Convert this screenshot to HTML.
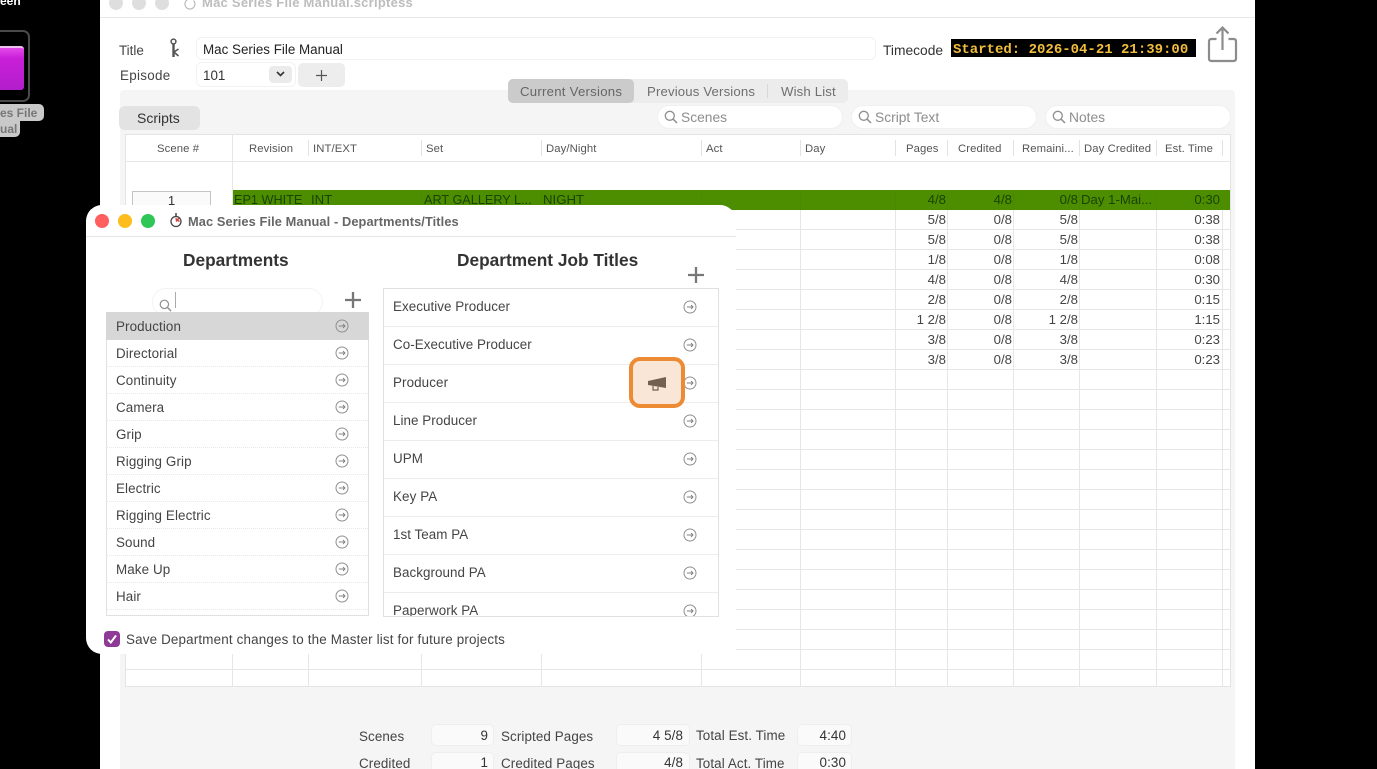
<!DOCTYPE html>
<html lang="en"><head><meta charset="utf-8"><title>Mac Series File Manual</title>
<style>
html,body{margin:0;padding:0;background:#000;width:1377px;height:769px;overflow:hidden}
body{position:relative;font-family:"Liberation Sans",sans-serif;font-size:13px;color:#333}
#w{position:absolute;left:0;top:0;width:1377px;height:769px;overflow:hidden;filter:blur(.3px)}
.a{position:absolute;box-sizing:border-box}
.t{position:absolute;white-space:nowrap;line-height:20px;height:20px;margin-top:1px}
.r{text-align:right}
.h{font-size:11.3px;color:#555;letter-spacing:.1px}
.d{font-size:13.2px;color:#444}
.g{font-size:13.2px;color:#1a4300}
.l{font-size:13.4px;color:#444;letter-spacing:.1px}
.f{background:#fafafa;border:1px solid #eeeeee;border-radius:5px}
.s{background:#fff;border-radius:12px;border:1px solid #f0f0f0}
.q{color:#8d8d8d;font-size:13.8px}
svg{position:absolute;overflow:visible}
</style></head><body>
<svg width="0" height="0" style="position:absolute"><defs>
<symbol id="go" viewBox="0 0 14 14"><circle cx="7" cy="7" r="6" fill="none" stroke="#8f8f8f" stroke-width="1"/><path d="M3.8 7H10M8 5 10 7 8 9" fill="none" stroke="#808080" stroke-width=".9"/></symbol>
<symbol id="mag" viewBox="0 0 14 14"><circle cx="5.8" cy="5.8" r="4.5" fill="none" stroke="#8f8f8f" stroke-width="1.3"/><path d="M9.2 9.2 13 13" stroke="#8f8f8f" stroke-width="1.5" fill="none"/></symbol>
</defs></svg>
<div id="w">

<!-- desktop -->
<div class="t" style="left:0;top:-10px;color:#fff;font-weight:bold;font-size:12px">een</div>
<div class="a" style="left:-20px;top:30px;width:50px;height:72px;border:2px solid #4a4a4a;border-radius:7px"></div>
<div class="a" style="left:-10px;top:46px;width:34px;height:44px;border-radius:3px;background:linear-gradient(#e44ae8,#c81fd8 25%,#b21ecb);border-top:2px solid #ecc0ee"></div>
<div class="a" style="left:-10px;top:104px;width:54px;height:17px;background:#c9c9c9;border-radius:5px"></div>
<div class="a" style="left:-10px;top:120px;width:30px;height:17px;background:#c9c9c9;border-radius:0 0 5px 5px"></div>
<div class="t" style="left:0;top:102px;font-size:12px;font-weight:bold;color:#777">es File</div>
<div class="t" style="left:0;top:118px;font-size:12px;font-weight:bold;color:#777">ual</div>

<!-- main window -->
<div class="a" style="left:100px;top:0;width:1155px;height:769px;background:#fff"></div>
<div class="a" style="left:100px;top:17px;width:1155px;height:1px;background:#e8e8e8"></div>
<div class="a" style="left:109px;top:-4px;width:14px;height:14px;border-radius:50%;background:#dedede"></div>
<div class="a" style="left:132px;top:-4px;width:14px;height:14px;border-radius:50%;background:#dedede"></div>
<div class="a" style="left:155px;top:-4px;width:14px;height:14px;border-radius:50%;background:#dedede"></div>
<svg style="left:184px;top:-2px" width="12" height="12" viewBox="0 0 12 12"><path d="M9.500 2.500A5 5 0 1 1 6 1" fill="none" stroke="#bbb" stroke-width="1.200"/></svg>
<div class="t" style="left:202px;top:-8px;font-weight:bold;color:#bdbdbd;font-size:13px;letter-spacing:.25px">Mac Series File Manual.scriptess</div>

<div class="t" style="left:119px;top:40px;color:#444;font-size:13.400px">Title</div>
<svg style="left:169px;top:38px" width="12" height="20" viewBox="0 0 12 20"><circle cx="4.500" cy="3.500" r="2.400" fill="none" stroke="#555" stroke-width="1.500"/><path d="M4.500 6V19" stroke="#555" stroke-width="2.400" fill="none"/><path d="M5 14 9.500 11M5.500 14.500 9.500 18" stroke="#555" stroke-width="1.600" fill="none"/></svg>
<div class="a" style="left:196px;top:37px;width:680px;height:23px;background:#fff;border:1px solid #f2f2f2;border-radius:6px"></div>
<div class="t" style="left:203px;top:39px;color:#222;font-size:13.400px">Mac Series File Manual</div>
<div class="t" style="left:120px;top:65px;color:#444;font-size:13.400px;letter-spacing:.3px">Episode</div>
<div class="a" style="left:196px;top:62px;width:100px;height:25px;background:#fff;border:1px solid #f2f2f2;border-radius:6px"></div>
<div class="t" style="left:203px;top:65px;color:#333;font-size:13.400px">101</div>
<div class="a" style="left:269px;top:66px;width:23px;height:17px;background:#ebebeb;border-radius:4px"></div>
<svg style="left:276px;top:71px" width="9" height="6" viewBox="0 0 9 6"><path d="M1 1 4.500 4.500 8 1" fill="none" stroke="#333" stroke-width="1.600"/></svg>
<div class="a" style="left:298px;top:63px;width:47px;height:24px;background:#ededed;border-radius:5px"></div>
<svg style="left:316px;top:70px" width="11" height="11" viewBox="0 0 11 11"><path d="M5.500 0V11M0 5.500H11" stroke="#555" stroke-width="1.200"/></svg>

<div class="t" style="left:883px;top:40px;color:#333;font-size:13.800px">Timecode</div>
<div class="a" style="left:951px;top:39px;width:245px;height:18px;background:#000"></div>
<div class="t" style="left:953px;top:39px;font-family:'Liberation Mono',monospace;font-weight:bold;font-size:14px;color:#f1bd3c;line-height:20px">Started: 2026-04-21 21:39:00</div>
<svg style="left:1207px;top:26px" width="31" height="38" viewBox="0 0 31 38"><path d="M9.500 13H4.500Q2 13 2 15.500V32.500Q2 35 4.500 35H26.500Q29 35 29 32.500V15.500Q29 13 26.500 13H21.500" fill="none" stroke="#8c8c8c" stroke-width="2.200"/><path d="M15.500 24V2M9.500 7.500 15.500 1.500 21.500 7.500" fill="none" stroke="#8c8c8c" stroke-width="2.200"/></svg>

<!-- panel -->
<div class="a" style="left:120px;top:90px;width:1115px;height:679px;background:#f5f5f5;border-radius:4px 4px 0 0"></div>
<div class="a" style="left:508px;top:79px;width:340px;height:24px;background:#ececec;border-radius:5px"></div>
<div class="a" style="left:508px;top:79px;width:126px;height:24px;background:#cbcbcb;border-radius:5px"></div>
<div class="a" style="left:767px;top:84px;width:1px;height:14px;background:#d8d8d8"></div>
<div class="t" style="left:520px;top:81px;color:#666;font-size:13.200px;letter-spacing:.25px">Current Versions</div>
<div class="t" style="left:647px;top:81px;color:#6f6f6f;font-size:13.200px;letter-spacing:.15px">Previous Versions</div>
<div class="t" style="left:781px;top:81px;color:#6f6f6f;font-size:13.200px;letter-spacing:.15px">Wish List</div>

<div class="a" style="left:119px;top:106px;width:81px;height:24px;background:#e3e3e3;border-radius:6px"></div>
<div class="t" style="left:137px;top:107px;color:#333;font-size:14px">Scripts</div>

<div class="a s" style="left:657px;top:105px;width:186px;height:24px"></div>
<svg style="left:664px;top:110px" width="14" height="14"><use href="#mag"/></svg>
<div class="t q" style="left:681px;top:107px">Scenes</div>
<div class="a s" style="left:851px;top:105px;width:186px;height:24px"></div>
<svg style="left:858px;top:110px" width="14" height="14"><use href="#mag"/></svg>
<div class="t q" style="left:875px;top:107px">Script Text</div>
<div class="a s" style="left:1045px;top:105px;width:186px;height:24px"></div>
<svg style="left:1052px;top:110px" width="14" height="14"><use href="#mag"/></svg>
<div class="t q" style="left:1069px;top:107px">Notes</div>

<!-- table -->
<div class="a" style="left:125px;top:134px;width:1106px;height:553px;background:#fff;border:1px solid #e4e4e4"></div>
<svg style="left:0;top:0" width="1377" height="769"><path d="M125 161.500H1231M232.500 134V687M308.500 210V687M421.500 210V687M541.500 210V687M701.500 210V687M800.500 210V687M895.500 210V687M947.500 210V687M1013.500 210V687M1079.500 210V687M1156.500 210V687M1222.500 210V687" stroke="#e6e6e6" stroke-width="1" fill="none"/><path d="M308.500 140V156M421.500 140V156M541.500 140V156M701.500 140V156M800.500 140V156M895.500 140V156M947.500 140V156M1013.500 140V156M1079.500 140V156M1156.500 140V156M1222.500 140V156" stroke="#e2e2e2" fill="none"/><path d="M232 229.500H1231M232 249.500H1231M232 269.500H1231M232 289.500H1231M232 309.500H1231M232 329.500H1231M232 349.500H1231M232 369.500H1231M232 389.500H1231M232 409.500H1231M232 429.500H1231M232 449.500H1231M232 469.500H1231M232 489.500H1231M232 509.500H1231M232 529.500H1231M232 549.500H1231M232 569.500H1231M232 589.500H1231M232 609.500H1231M232 629.500H1231M232 649.500H1231M125 669.500H1231" stroke="#e6e6e6" fill="none"/></svg>

<div class="t h" style="left:157px;top:138px">Scene #</div>
<div class="t h" style="left:249px;top:138px">Revision</div>
<div class="t h" style="left:313px;top:138px">INT/EXT</div>
<div class="t h" style="left:426px;top:138px">Set</div>
<div class="t h" style="left:546px;top:138px">Day/Night</div>
<div class="t h" style="left:706px;top:138px">Act</div>
<div class="t h" style="left:805px;top:138px">Day</div>
<div class="t h" style="left:906px;top:138px">Pages</div>
<div class="t h" style="left:958px;top:138px">Credited</div>
<div class="t h" style="left:1022px;top:138px">Remaini...</div>
<div class="t h" style="left:1084px;top:138px">Day Credited</div>
<div class="t h" style="left:1165px;top:138px">Est. Time</div>

<div class="a" style="left:132px;top:191px;width:79px;height:20px;background:#fafafa;border:1px solid #c4c4c4"></div>
<div class="t d" style="left:132px;width:79px;text-align:center;top:190px;color:#333">1</div>

<div class="a" style="left:233px;top:190px;width:997px;height:20px;background:#4d8e00"></div>
<svg style="left:0;top:0" width="1377" height="769"><path d="M421.500 190V210M541.500 190V210M701.500 190V210M800.500 190V210M895.500 190V210M947.500 190V210M1013.500 190V210M1079.500 190V210M1156.500 190V210" stroke="#4a8806" fill="none"/></svg>
<div class="t g" style="left:234px;top:189px;font-size:12.700px">EP1 WHITE</div>
<div class="t g" style="left:311px;top:189px">INT</div>
<div class="t g" style="left:424px;top:189px;font-size:12.700px">ART GALLERY L...</div>
<div class="t g" style="left:543px;top:189px">NIGHT</div>
<div class="t g r" style="left:880px;width:66px;top:189px">4/8</div>
<div class="t g r" style="left:946px;width:66px;top:189px">4/8</div>
<div class="t g r" style="left:1012px;width:66px;top:189px">0/8</div>
<div class="t g" style="left:1081px;top:189px">Day 1-Mai...</div>
<div class="t g r" style="left:1154px;width:66px;top:189px">0:30</div>

<div class="t d r" style="left:880px;width:66px;top:209px">5/8</div><div class="t d r" style="left:946px;width:66px;top:209px">0/8</div><div class="t d r" style="left:1012px;width:66px;top:209px">5/8</div><div class="t d r" style="left:1154px;width:66px;top:209px">0:38</div>
<div class="t d r" style="left:880px;width:66px;top:229px">5/8</div><div class="t d r" style="left:946px;width:66px;top:229px">0/8</div><div class="t d r" style="left:1012px;width:66px;top:229px">5/8</div><div class="t d r" style="left:1154px;width:66px;top:229px">0:38</div>
<div class="t d r" style="left:880px;width:66px;top:249px">1/8</div><div class="t d r" style="left:946px;width:66px;top:249px">0/8</div><div class="t d r" style="left:1012px;width:66px;top:249px">1/8</div><div class="t d r" style="left:1154px;width:66px;top:249px">0:08</div>
<div class="t d r" style="left:880px;width:66px;top:269px">4/8</div><div class="t d r" style="left:946px;width:66px;top:269px">0/8</div><div class="t d r" style="left:1012px;width:66px;top:269px">4/8</div><div class="t d r" style="left:1154px;width:66px;top:269px">0:30</div>
<div class="t d r" style="left:880px;width:66px;top:289px">2/8</div><div class="t d r" style="left:946px;width:66px;top:289px">0/8</div><div class="t d r" style="left:1012px;width:66px;top:289px">2/8</div><div class="t d r" style="left:1154px;width:66px;top:289px">0:15</div>
<div class="t d r" style="left:880px;width:66px;top:309px">1 2/8</div><div class="t d r" style="left:946px;width:66px;top:309px">0/8</div><div class="t d r" style="left:1012px;width:66px;top:309px">1 2/8</div><div class="t d r" style="left:1154px;width:66px;top:309px">1:15</div>
<div class="t d r" style="left:880px;width:66px;top:329px">3/8</div><div class="t d r" style="left:946px;width:66px;top:329px">0/8</div><div class="t d r" style="left:1012px;width:66px;top:329px">3/8</div><div class="t d r" style="left:1154px;width:66px;top:329px">0:23</div>
<div class="t d r" style="left:880px;width:66px;top:349px">3/8</div><div class="t d r" style="left:946px;width:66px;top:349px">0/8</div><div class="t d r" style="left:1012px;width:66px;top:349px">3/8</div><div class="t d r" style="left:1154px;width:66px;top:349px">0:23</div>

<!-- totals -->
<div class="a f" style="left:431px;top:724px;width:63px;height:22px"></div>
<div class="a f" style="left:616px;top:724px;width:74px;height:22px"></div>
<div class="a f" style="left:797px;top:724px;width:55px;height:22px"></div>
<div class="a f" style="left:431px;top:752px;width:63px;height:22px"></div>
<div class="a f" style="left:616px;top:752px;width:74px;height:22px"></div>
<div class="a f" style="left:797px;top:752px;width:55px;height:22px"></div>
<div class="t l" style="left:359px;top:726px">Scenes</div>
<div class="t l r" style="left:440px;width:48px;top:725px;color:#333">9</div>
<div class="t l" style="left:501px;top:726px">Scripted Pages</div>
<div class="t l r" style="left:625px;width:58px;top:725px;color:#333">4 5/8</div>
<div class="t l" style="left:696px;top:725px">Total Est. Time</div>
<div class="t l r" style="left:806px;width:40px;top:725px;color:#333">4:40</div>
<div class="t l" style="left:359px;top:753px">Credited</div>
<div class="t l r" style="left:440px;width:48px;top:752px;color:#333">1</div>
<div class="t l" style="left:501px;top:753px">Credited Pages</div>
<div class="t l r" style="left:625px;width:58px;top:752px;color:#333">4/8</div>
<div class="t l" style="left:696px;top:753px">Total Act. Time</div>
<div class="t l r" style="left:806px;width:40px;top:752px;color:#333">0:30</div>

<!-- dialog -->
<div class="a" style="left:86px;top:205px;width:650px;height:425px;background:#fff;border-radius:16px 16px 0 0"></div>
<div class="a" style="left:731px;top:625px;width:5px;height:25px;background:#fff"></div>
<div class="a" style="left:86px;top:625px;width:645px;height:29px;background:#fff;border-radius:0 0 0 16px"></div>
<div class="a" style="left:86px;top:236px;width:650px;height:1px;background:#e6e6e6"></div>
<div class="a" style="left:95px;top:214px;width:14px;height:14px;border-radius:50%;background:#ff5f5f"></div>
<div class="a" style="left:118px;top:214px;width:14px;height:14px;border-radius:50%;background:#fdbd1d"></div>
<div class="a" style="left:141px;top:214px;width:14px;height:14px;border-radius:50%;background:#2ec656"></div>
<svg style="left:169px;top:212px" width="14" height="16" viewBox="0 0 14 16"><circle cx="7" cy="9.500" r="5" fill="none" stroke="#444" stroke-width="1.300"/><path d="M7 1V4.500" stroke="#444" stroke-width="1.500"/><path d="M6.500 6.500 10.500 9.500M10 6 7 9.500" stroke="#d24040" stroke-width="1.500" fill="none"/></svg>
<div class="t" style="left:188px;top:211px;font-weight:bold;font-size:12.800px;color:#666;letter-spacing:.1px">Mac Series File Manual - Departments/Titles</div>

<div class="t" style="left:183px;top:249px;font-weight:bold;font-size:17.300px;color:#333">Departments</div>
<div class="t" style="left:457px;top:249px;font-weight:bold;font-size:17.300px;color:#333">Department Job Titles</div>
<svg style="left:688px;top:267px" width="16" height="16" viewBox="0 0 16 16"><path d="M8 0V16M0 8H16" stroke="#777" stroke-width="2.300"/></svg>
<svg style="left:345px;top:292px" width="16" height="16" viewBox="0 0 16 16"><path d="M8 0V16M0 8H16" stroke="#777" stroke-width="2.300"/></svg>
<div class="a" style="left:152px;top:288px;width:171px;height:28px;background:#fff;border:1px solid #f3f3f3;border-radius:14px"></div>
<svg style="left:159px;top:299px" width="13" height="13"><use href="#mag"/></svg>
<div class="a" style="left:175px;top:292px;width:1px;height:16px;background:#aaa"></div>

<!-- departments list -->
<div class="a" style="left:106px;top:312px;width:263px;height:304px;background:#fff;border:1px solid #e0e0e0;border-top:0"></div>
<div class="a" style="left:106px;top:312px;width:263px;height:28px;background:#d7d7d7"></div>
<svg style="left:0;top:0" width="1377" height="769"><path d="M107 366.500H368M107 393.500H368M107 420.500H368M107 447.500H368M107 474.500H368M107 501.500H368M107 528.500H368M107 555.500H368M107 582.500H368M107 609.500H368" stroke="#e8e8e8" stroke-dasharray="1 1" fill="none"/></svg>
<div class="t l" style="left:116px;top:316px">Production</div>
<div class="t l" style="left:116px;top:343px">Directorial</div>
<div class="t l" style="left:116px;top:370px">Continuity</div>
<div class="t l" style="left:116px;top:397px">Camera</div>
<div class="t l" style="left:116px;top:424px">Grip</div>
<div class="t l" style="left:116px;top:451px">Rigging Grip</div>
<div class="t l" style="left:116px;top:478px">Electric</div>
<div class="t l" style="left:116px;top:505px">Rigging Electric</div>
<div class="t l" style="left:116px;top:532px">Sound</div>
<div class="t l" style="left:116px;top:559px">Make Up</div>
<div class="t l" style="left:116px;top:586px">Hair</div>
<svg style="left:334.500px;top:319px" width="14" height="14"><use href="#go"/></svg>
<svg style="left:334.500px;top:346px" width="14" height="14"><use href="#go"/></svg>
<svg style="left:334.500px;top:373px" width="14" height="14"><use href="#go"/></svg>
<svg style="left:334.500px;top:400px" width="14" height="14"><use href="#go"/></svg>
<svg style="left:334.500px;top:427px" width="14" height="14"><use href="#go"/></svg>
<svg style="left:334.500px;top:454px" width="14" height="14"><use href="#go"/></svg>
<svg style="left:334.500px;top:481px" width="14" height="14"><use href="#go"/></svg>
<svg style="left:334.500px;top:508px" width="14" height="14"><use href="#go"/></svg>
<svg style="left:334.500px;top:535px" width="14" height="14"><use href="#go"/></svg>
<svg style="left:334.500px;top:562px" width="14" height="14"><use href="#go"/></svg>
<svg style="left:334.500px;top:589px" width="14" height="14"><use href="#go"/></svg>

<!-- job titles list -->
<div class="a" style="left:383px;top:288px;width:336px;height:329px;background:#fff;border:1px solid #e0e0e0;overflow:hidden">
<svg style="left:-384px;top:-289px" width="1377" height="769"><path d="M384 326.500H718M384 364.500H718M384 402.500H718M384 440.500H718M384 478.500H718M384 516.500H718M384 554.500H718M384 592.500H718" stroke="#ececec" fill="none"/></svg>
<div class="t l" style="left:9px;top:7px;letter-spacing:.05px">Executive Producer</div>
<div class="t l" style="left:9px;top:45px;letter-spacing:.05px">Co-Executive Producer</div>
<div class="t l" style="left:9px;top:83px">Producer</div>
<div class="t l" style="left:9px;top:121px;letter-spacing:.05px">Line Producer</div>
<div class="t l" style="left:9px;top:159px">UPM</div>
<div class="t l" style="left:9px;top:197px">Key PA</div>
<div class="t l" style="left:9px;top:235px;letter-spacing:.05px">1st Team PA</div>
<div class="t l" style="left:9px;top:273px;letter-spacing:.05px">Background PA</div>
<div class="t l" style="left:9px;top:311px;letter-spacing:.05px">Paperwork PA</div>
<svg style="left:299px;top:11px" width="14" height="14"><use href="#go"/></svg>
<svg style="left:299px;top:49px" width="14" height="14"><use href="#go"/></svg>
<svg style="left:299px;top:87px" width="14" height="14"><use href="#go"/></svg>
<svg style="left:299px;top:125px" width="14" height="14"><use href="#go"/></svg>
<svg style="left:299px;top:163px" width="14" height="14"><use href="#go"/></svg>
<svg style="left:299px;top:201px" width="14" height="14"><use href="#go"/></svg>
<svg style="left:299px;top:239px" width="14" height="14"><use href="#go"/></svg>
<svg style="left:299px;top:277px" width="14" height="14"><use href="#go"/></svg>
<svg style="left:299px;top:315px" width="14" height="14"><use href="#go"/></svg>
</div>

<!-- highlight -->
<div class="a" style="left:629px;top:357px;width:56px;height:51px;background:#f9e6d6;border:4px solid #ec8b33;border-radius:11px"></div>
<svg style="left:647px;top:376px" width="20" height="15" viewBox="0 0 20 15"><path d="M1 5 19 1V12L1 9Z" fill="#75604f"/><path d="M6 10V14H11V11" fill="none" stroke="#75604f" stroke-width="1.200"/></svg>

<!-- checkbox -->
<div class="a" style="left:104px;top:631px;width:16px;height:16px;background:#8e3a96;border-radius:4px"></div>
<svg style="left:106px;top:633px" width="12" height="12" viewBox="0 0 12 12"><path d="M2 6.500 4.800 9.500 10 2.500" fill="none" stroke="#fff" stroke-width="2"/></svg>
<div class="t l" style="left:126px;top:629px;letter-spacing:.17px">Save Department changes to the Master list for future projects</div>
</div>
</body></html>
